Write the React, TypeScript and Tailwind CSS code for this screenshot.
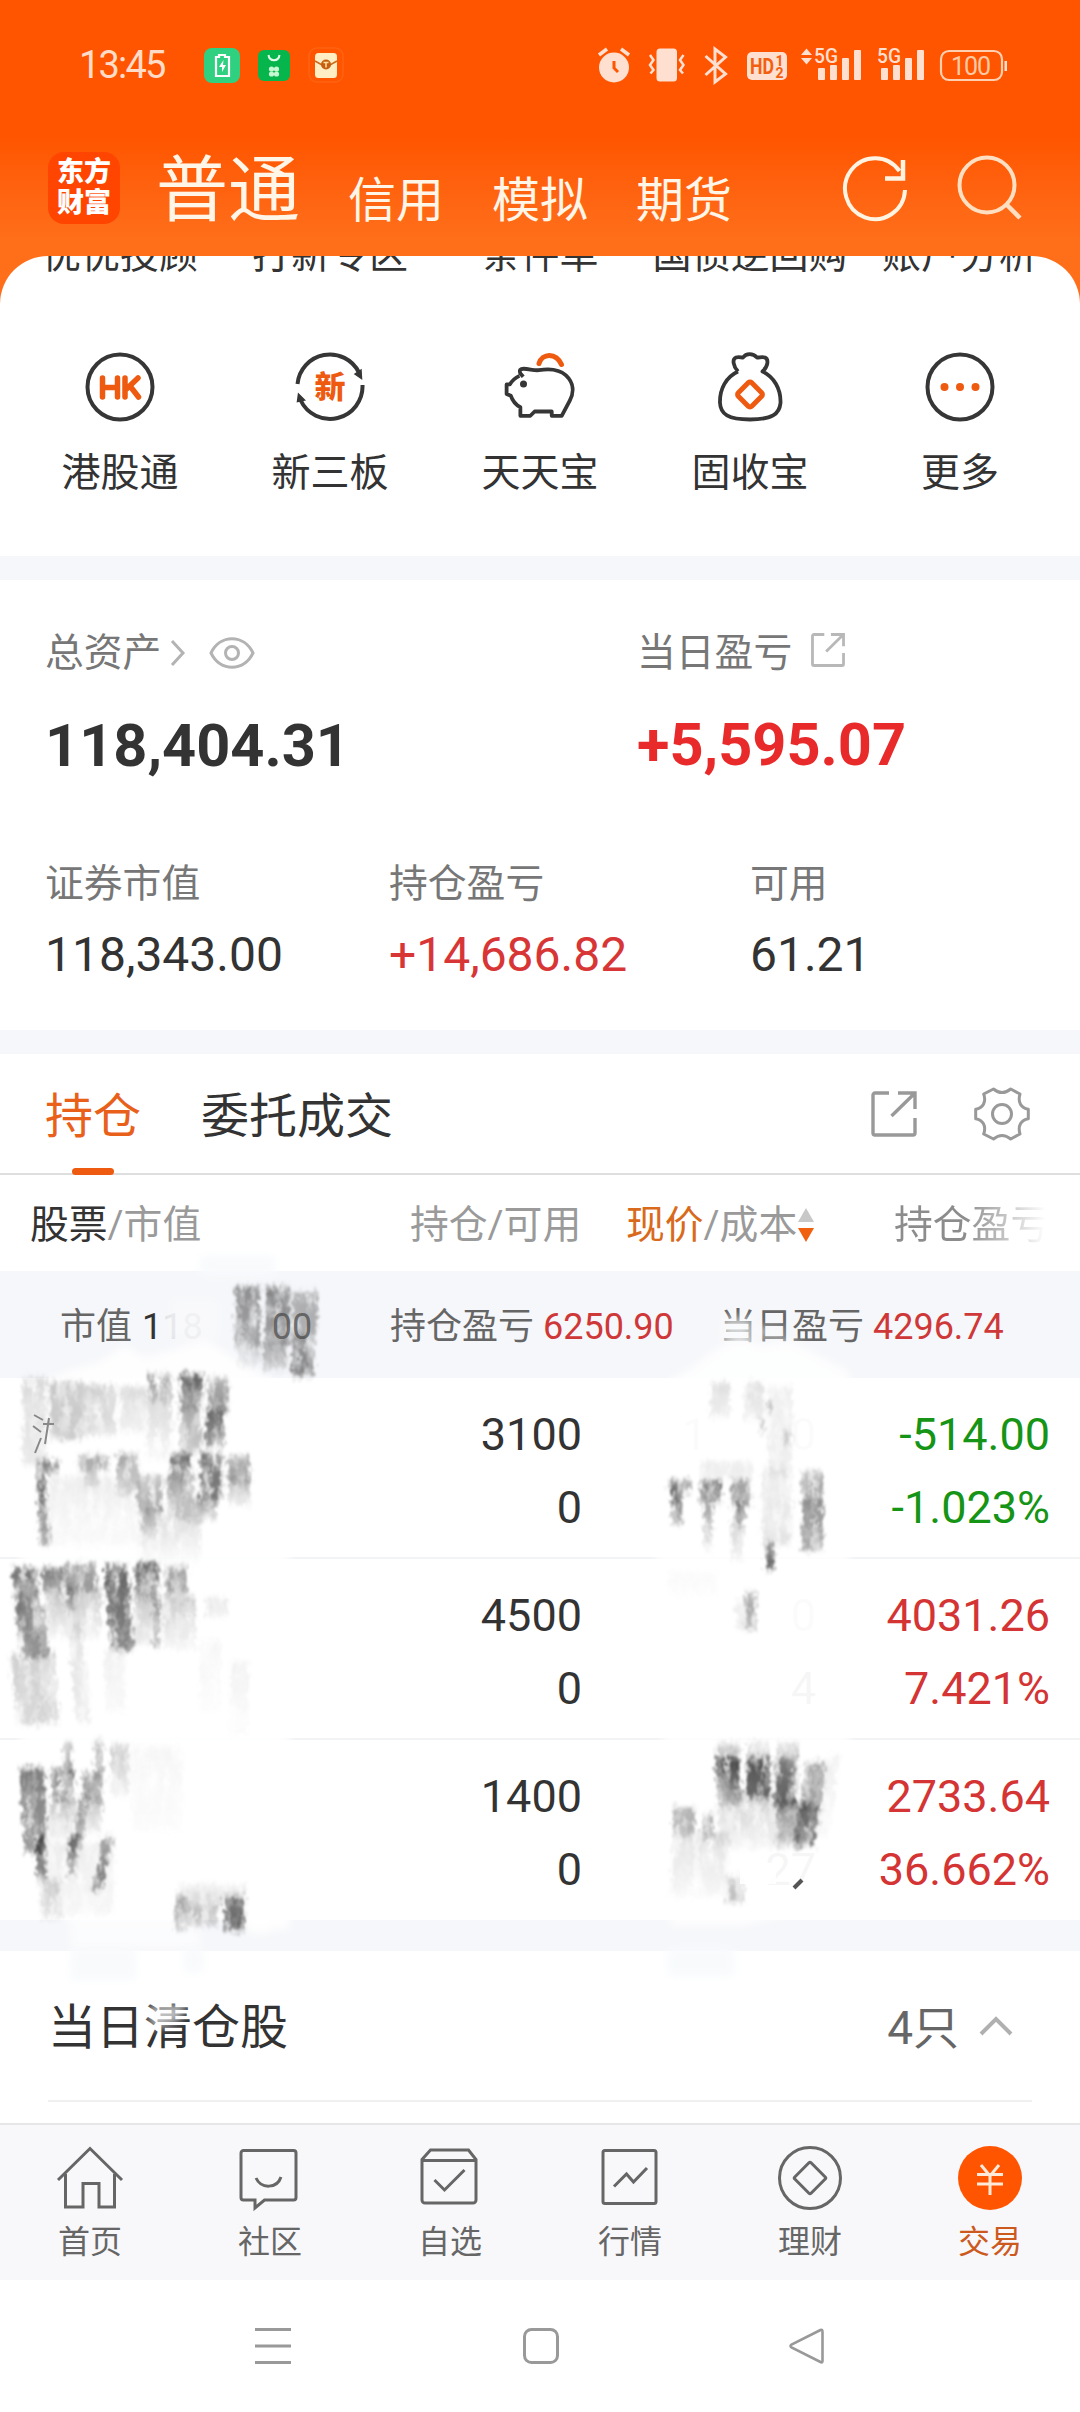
import type { ReactNode } from 'react';
import clsx from 'clsx';

const clippedLabels = ['优优投顾', '打新专区', '条件单', '国债逆回购', '账户分析'];

const HkIcon = () => (
  <svg width="72" height="72" viewBox="0 0 72 72" fill="none">
    <circle cx="36" cy="36" r="32.5" stroke="#363636" strokeWidth="4" />
    <path d="M18.5 27v19M33.500 27v19M18.500 36.500h15M41 27v19M54 27L42.500 38M46 35L54.500 46" stroke="#ee5a10" strokeWidth="5.500" strokeLinecap="round" strokeLinejoin="round" />
  </svg>
);

const NewBoardIcon = () => (
  <svg width="72" height="72" viewBox="0 0 72 72" fill="none">
    <path d="M3.500 33A32.500 32.500 0 0 1 65 21.500M68.500 34A32.500 32.500 0 0 1 6.500 49" stroke="#363636" strokeWidth="4" />
    <path d="M61 23l6-4 .5 8.500zM4.500 43l-1 7.500 7-1.500z" fill="#363636" stroke="#363636" strokeWidth="1.500" />
    <text x="36" y="46.500" textAnchor="middle" fontSize="31" fontWeight="900" fill="#ee5a10" fontFamily="Noto Sans CJK SC, sans-serif">新</text>
  </svg>
);

const PiggyIcon = () => (
  <svg width="72" height="72" viewBox="0 0 72 72" fill="none">
    <path
      d="M15.500 23.500L12.500 20c-1.500-4 0-5 3.500-5 6 0 10 2 16 1.500 12-2 22-.5 28.500 5.500 8.500 8 8.500 18 4 26.500L56 64.500H45.500V60h-18l-4.500 4.500H12.500V55.500C7 52.500 4 48 2.500 43.500L-2 41.500V31.500h3.500C3.500 28 6 25 11.500 22.500"
      transform="translate(4.500 3.500) scale(.95)"
      stroke="#363636"
      strokeWidth="4"
      strokeLinejoin="round"
    />
    <circle cx="19.500" cy="33" r="3.500" fill="#363636" />
    <path d="M35 12.500C38 2 52 1 57.500 13.500" stroke="#ee5a10" strokeWidth="5" strokeLinecap="round" />
  </svg>
);

const BagIcon = () => (
  <svg width="72" height="72" viewBox="0 0 72 72" fill="none">
    <path
      d="M24 20.500C19 15 18 8 22 6.500c3-1 5 0 7 0C32 2 39 2 43 6.500c3 0 5-1 8 0 4 2 3 9-2.500 14C60 26 67 38 66.500 52 65.500 63 58 68.500 36 68.500S6.500 63 6 52C5.500 38 12 26 24 20.500"
      stroke="#363636"
      strokeWidth="3.800"
      strokeLinejoin="round"
    />
    <rect x="26.500" y="34" width="19" height="19" rx="2.500" transform="rotate(45 36 43.500)" stroke="#ee5a10" strokeWidth="5" />
  </svg>
);

const MoreIcon = () => (
  <svg width="72" height="72" viewBox="0 0 72 72" fill="none">
    <circle cx="36" cy="36" r="32.500" stroke="#363636" strokeWidth="4" />
    <g fill="#ee5a10">
      <circle cx="20.500" cy="36" r="4" />
      <circle cx="36" cy="36" r="4" />
      <circle cx="51.500" cy="36" r="4" />
    </g>
  </svg>
);

const shortcuts = [
  { label: '港股通', icon: <HkIcon /> },
  { label: '新三板', icon: <NewBoardIcon /> },
  { label: '天天宝', icon: <PiggyIcon /> },
  { label: '固收宝', icon: <BagIcon /> },
  { label: '更多', icon: <MoreIcon /> },
];

const holdings = [
  { held: '3100', free: '0', price: ['1', '0'], cost: ['', ''], profit: '-514.00', rate: '-1.023%', up: false },
  { held: '4500', free: '0', price: ['', '0'], cost: ['', '4'], profit: '4031.26', rate: '7.421%', up: true },
  { held: '1400', free: '0', price: ['', ''], cost: ['', '27'], profit: '2733.64', rate: '36.662%', up: true },
];

const ShareIcon = ({ size, color, width }: { size: number; color: string; width: number }) => (
  <svg width={size} height={size} viewBox="0 0 46 46" fill="none" stroke={color} strokeWidth={width}>
    <path d="M18 2H4a2 2 0 0 0-2 2v38a2 2 0 0 0 2 2h38a2 2 0 0 0 2-2V27M27 2h17V18M43.500 2.500L20.500 25" />
  </svg>
);

const StatusBar = () => (
  <div className="flex h-[128px] items-center pt-[1px] pl-[79px]">
    <span className="w-[125px] text-[38px] leading-none tracking-[-1.8px] text-[#ffdcc8]">13:45</span>
    <svg width="140" height="40" viewBox="204 44 140 40" fill="none">
      <rect x="204" y="47" width="36" height="35" rx="8" fill="#2fd180" />
      <path d="M219 56v-2h6v2h4v19h-13V56z" stroke="#fff" strokeWidth="2.200" />
      <path d="M223.500 59l-4.500 7h3v5l4-7h-3z" fill="#fff" />
      <rect x="258" y="49" width="32" height="31" rx="6" fill="#06b64c" />
      <path d="M268.500 54c1 7 10 7 11 0" stroke="#e3ffe9" strokeWidth="2" />
      <g fill="#c8f7d3">
        <circle cx="271.500" cy="68" r="2.600" /><circle cx="276.500" cy="68" r="2.600" />
        <circle cx="271.500" cy="73" r="2.600" /><circle cx="276.500" cy="73" r="2.600" />
      </g>
      <rect x="309" y="47" width="34" height="34" rx="8" stroke="#ff6210" strokeWidth="1.500" />
      <rect x="315" y="52" width="22" height="25" rx="3.500" fill="#ffedc4" />
      <path d="M315 60l7 4h8l7-4" stroke="#c96a1a" strokeWidth="1.500" />
      <circle cx="326" cy="63.500" r="5" fill="#c55e12" />
      <path d="M323.500 61.500h5M326 61.500v5" stroke="#ffdf9e" strokeWidth="1.500" />
    </svg>
    <svg className="ml-[250px]" width="420" height="40" viewBox="594 44 420 40" fill="none">
      <g fill="#ffdfd0">
        <circle cx="614" cy="66.500" r="15" />
        <rect x="656.500" y="47.500" width="20.500" height="33" rx="3.500" />
        <rect x="747" y="51" width="40" height="28" rx="5" />
        <path d="M801 54l5.500-6.500L812 54zM801 57h11l-5.500 6.500z" />
        {[818, 881].map((x) => (
          <g key={x}>
            <rect x={x} y="67" width="7" height="12" rx="1" />
            <rect x={x + 12} y="64" width="7" height="15" rx="1" />
            <rect x={x + 24} y="57" width="7" height="22" rx="1" />
            <rect x={x + 36} y="49" width="7" height="30" rx="1" />
          </g>
        ))}
        <rect x="1004.500" y="60" width="2.500" height="10" />
      </g>
      <path d="M614 60v7l4 4" stroke="#ff5500" strokeWidth="3" />
      <path d="M599 54l8-6M621 48l8 6" stroke="#ffdfd0" strokeWidth="3.500" />
      <path d="M650 54l3.500 5-3.500 5 3.500 5-3 3.500M683.500 54l-3.500 5 3.500 5-3.500 5 3 3.500" stroke="#ffdfd0" strokeWidth="2.500" />
      <path d="M705.500 55l20 18-10.500 8V48l10.500 8-20 18" stroke="#ffdfd0" strokeWidth="3" />
      <g fontFamily="Roboto, sans-serif" fill="#f2600f">
        <text x="750" y="73" fontSize="22" fontWeight="700" textLength="24" lengthAdjust="spacingAndGlyphs">HD</text>
        <text x="775.500" y="65" fontSize="14" fontWeight="700">1</text>
        <text x="775.500" y="77" fontSize="14" fontWeight="700">2</text>
        <text x="814" y="62" fontSize="21" fontWeight="500" fill="#ffdfd0" textLength="24" lengthAdjust="spacingAndGlyphs">5G</text>
        <text x="877" y="62" fontSize="21" fontWeight="500" fill="#ffdfd0" textLength="24" lengthAdjust="spacingAndGlyphs">5G</text>
        <text x="951" y="73.500" fontSize="25" fill="#ffc9a4" textLength="40">100</text>
      </g>
      <rect x="941" y="50" width="61" height="29" rx="8" stroke="#ffcfb0" strokeWidth="2.200" />
    </svg>
  </div>
);

const Header = () => (
  <header className="h-[304px] bg-linear-to-b from-[#ff5500] from-45% to-[#ff6f1a] to-80% text-white">
    <StatusBar />
    <div className="flex h-[128px] pl-12">
      <div className="mt-6 flex size-[72px] flex-col items-center justify-center rounded-2xl bg-[#ff4500] text-[27px] leading-[31px] font-black">
        <span>东方</span>
        <span>财富</span>
      </div>
      <nav className="ml-9 flex h-[99px] items-end gap-12 text-[48px] leading-none text-[#fff6e8]">
        <span className="text-[72px] leading-none">普通</span>
        <span className="mb-[2px]">信用</span>
        <span className="mb-[2px]">模拟</span>
        <span className="mb-[2px]">期货</span>
      </nav>
      <svg className="mt-6 ml-[108px]" width="186" height="72" viewBox="840 152 186 72" fill="none">
        <path d="M905 190A30 30.500 0 1 1 899.500 171" stroke="#fff3e2" strokeWidth="4" />
        <path d="M903 160v18.500H885" stroke="#fff3e2" strokeWidth="4.500" />
        <circle cx="987" cy="185" r="27.500" stroke="#ffdfc2" strokeWidth="4" />
        <path d="M1006 204l14 14" stroke="#ffdfc2" strokeWidth="4.500" />
      </svg>
    </div>
  </header>
);

const Shortcuts = () => (
  <section className="relative -mt-12 h-[300px] overflow-hidden rounded-t-[48px] bg-white text-[39px] text-[#333]">
    <div className="-mt-[23px] flex justify-center leading-[44px]">
      {clippedLabels.map((label) => (
        <div key={label} className="flex w-[210px] justify-center whitespace-nowrap">{label}</div>
      ))}
    </div>
    <div className="mt-[74px] flex justify-center">
      {shortcuts.map((item) => (
        <div key={item.label} className="flex w-[210px] flex-col items-center">
          {item.icon}
          <span className="mt-[28px] leading-[44px]">{item.label}</span>
        </div>
      ))}
    </div>
  </section>
);

const Stat = ({ label, children }: { label: ReactNode; children: ReactNode }) => (
  <div>
    <div className="flex h-[44px] items-center text-[38.800px] leading-[44px] text-[#777]">{label}</div>
    {children}
  </div>
);

const Assets = () => (
  <section className="h-[450px] px-[45px] pt-[51px] text-[#333]">
    <div className="grid grid-cols-[592px_1fr]">
      <Stat
        label={
          <>
            总资产
            <svg className="ml-[5px]" width="100" height="36" viewBox="168 634 100 36" fill="none" stroke="#b3b3b3" strokeWidth="3">
              <path d="M174 640l11 12-11 12" />
              <path d="M213 652c9-19 33-19 42 0-9 19-33 19-42 0z" />
              <circle cx="234" cy="652" r="6.500" />
            </svg>
          </>
        }
      >
        <div className="mt-[39px] text-[59.500px] leading-[64px] font-bold">118,404.31</div>
      </Stat>
      <Stat label={<>当日盈亏<span className="mt-[-6px] ml-[19px]"><ShareIcon size={34} color="#b8b8b8" width={3.8} /></span></>}>
        <div className="mt-[38px] text-[59.500px] leading-[64px] font-bold text-[#e92a2a]">+5,595.07</div>
      </Stat>
    </div>
    <div className="mt-[84px] grid grid-cols-[344px_361px_1fr]">
      <Stat label="证券市值">
        <div className="mt-[23px] text-[48px] leading-[52px]">118,343.00</div>
      </Stat>
      <Stat label="持仓盈亏">
        <div className="mt-[23px] text-[48px] leading-[52px] text-[#d83636]">+14,686.82</div>
      </Stat>
      <Stat label="可用">
        <div className="mt-[23px] text-[48px] leading-[52px]">61.21</div>
      </Stat>
    </div>
  </section>
);

const Tabs = () => (
  <div className="flex h-[121px] items-start border-b-2 border-[#dedede] pr-[50px] pl-[45px] text-[48px]">
    <div className="flex h-[121px] flex-col items-center text-[#e8601a]">
      <span className="mt-[37px] leading-[52px]">持仓</span>
      <span className="mt-auto h-[7px] w-[42px] rounded-sm bg-[#ee5a10]" />
    </div>
    <span className="mt-[37px] ml-[60px] leading-[52px] text-[#333]">委托成交</span>
    <div className="mt-[32px] ml-auto flex items-center gap-[57px]">
      <ShareIcon size={46} color="#999" width={3.4} />
      <svg width="56" height="56" viewBox="0 0 56 56" fill="none" stroke="#999" strokeWidth="3">
        <path
          d="M9.700 8L19.500 3Q28 10 36.700 3L46 8C43.500 16 47 22 54.300 23.300V32.700C47 34 43.500 40 46 48L36.700 53Q28 46 19.500 53L9.700 48C12.500 40 9 34 1.700 32.700V23.300C9 22 12.500 16 9.700 8z"
          strokeLinejoin="round"
        />
        <circle cx="28" cy="28" r="9.500" />
      </svg>
    </div>
  </div>
);

const TableHead = () => (
  <div className="flex h-[96px] items-center pt-[3px] text-[38.800px] leading-[44px] whitespace-nowrap text-[#9a9a9a]">
    <div className="w-[410px] pl-[30px]"><span className="text-[#333]">股票</span>/市值</div>
    <div className="w-[216px]">持仓/可用</div>
    <div className="flex w-[268px] items-center">
      <span><span className="text-[#d96a1c]">现价</span>/成本</span>
      <svg width="18" height="36" viewBox="0 0 18 36">
        <path d="M9 1l8 14H1z" fill="#c8c8c8" />
        <path d="M1 21h16L9 35z" fill="#f0600f" />
      </svg>
    </div>
    <div className="bg-linear-to-r from-[#8c8c8c] from-45% to-white to-98% bg-clip-text text-transparent">持仓盈亏</div>
  </div>
);

const Summary = () => (
  <div className="flex h-[107px] items-center bg-[#f6f7fa] pt-1 text-[36px] leading-[44px] whitespace-nowrap text-[#666]">
    <div className="flex w-[390px] pl-[60px]">
      <span className="w-[82px]">市值</span>
      <span className="text-[#333]">1</span>
      <span className="text-[#e2e3e6]">1</span>
      <span className="text-[#eaebee]">8</span>
      <span className="ml-[69px] text-[#777]">00</span>
    </div>
    <div className="w-[330px]">持仓盈亏 <span className="text-[#cf3838]">6250.90</span></div>
    <div>当日盈亏 <span className="text-[#cf3838]">4296.74</span></div>
  </div>
);

const Ghost = ({ chars, className }: { chars: string[]; className: string }) => (
  <span className={clsx('flex h-[73px] justify-between pl-[100px]', className)}>
    <span>{chars[0]}</span>
    <span>{chars[1]}</span>
  </span>
);

const Holdings = () => (
  <div>
    {holdings.map((row, i) => (
      <div
        key={row.held}
        className={clsx('grid grid-cols-[582px_234px_234px] text-right text-[45px] leading-[73px] text-[#333]', i < 2 ? 'h-[181px] border-b-2 border-[#f2f3f5]' : 'h-[180px]')}
      >
        <div className="pt-[20px]">
          <div>{row.held}</div>
          <div>{row.free}</div>
        </div>
        <div className="pt-[20px]">
          <Ghost chars={row.price} className="text-[#ececec]" />
          <Ghost chars={row.cost} className="text-[#d2d2d2]" />
        </div>
        <div className={clsx('pt-[20px]', row.up ? 'text-[#d43434]' : 'text-[#169416]')}>
          <div>{row.profit}</div>
          <div>{row.rate}</div>
        </div>
      </div>
    ))}
  </div>
);

// x, y, width, height, opacity at top, opacity at bottom, sideways drift
type Stroke = [number, number, number, number, number, number, number?];

const strokes: Stroke[] = [
  [235, 1287, 25, 58, 0.6, 0.5], [238, 1343, 22, 24, 0.3, 0.05],
  [265, 1287, 25, 58, 0.65, 0.55], [263, 1343, 24, 28, 0.5, 0.2],
  [293, 1291, 24, 46, 0.4, 0.45], [292, 1335, 22, 41, 0.5, 0.75],
  [22, 1377, 24, 88, 0.2, 0.12], [50, 1382, 32, 58, 0.3, 0.3], [82, 1385, 34, 50, 0.25, 0.18],
  [120, 1387, 26, 45, 0.2, 0.08], [149, 1375, 22, 26, 0.8, 0.3], [147, 1398, 25, 62, 0.2, 0.05],
  [180, 1374, 22, 32, 0.95, 0.5], [180, 1404, 22, 48, 0.5, 0.3], [208, 1378, 20, 36, 0.4, 0.7], [206, 1412, 18, 36, 0.8, 0.6],
  [36, 1461, 22, 12, 0.8, 0.5], [36, 1470, 9, 76, 0.9, 0.5, 5],
  [78, 1456, 30, 14, 0.5, 0.4], [85, 1468, 12, 20, 0.3, 0.1], [117, 1454, 22, 42, 0.5, 0.15],
  [138, 1476, 24, 36, 0.3, 0.5], [142, 1508, 18, 30, 0.4, 0.05],
  [171, 1453, 20, 25, 0.9, 0.5], [168, 1475, 26, 44, 0.5, 0.3],
  [200, 1453, 22, 48, 0.7, 0.8], [195, 1500, 22, 20, 0.5, 0.2],
  [228, 1456, 22, 26, 0.4, 0.6], [228, 1480, 22, 25, 0.4, 0.1],
  [50, 1476, 90, 70, 0.1, 0.03], [140, 1515, 60, 50, 0.2, 0],
  [12, 1568, 24, 40, 0.75, 0.7, 4], [16, 1606, 28, 52, 0.7, 0.6, 5],
  [43, 1568, 20, 22, 0.75, 0.5], [64, 1564, 32, 26, 0.5, 0.6], [66, 1588, 8, 24, 0.7, 0.4], [45, 1588, 56, 50, 0.35, 0.05],
  [104, 1566, 23, 84, 0.85, 0.7, 7], [135, 1563, 24, 36, 0.85, 0.5], [134, 1594, 22, 50, 0.3, 0.1], [154, 1596, 6, 52, 0.55, 0.3],
  [165, 1567, 22, 26, 0.45, 0.6], [163, 1595, 32, 54, 0.3, 0.05], [206, 1598, 22, 18, 0.15, 0.08],
  [10, 1654, 26, 70, 0.25, 0.22, 8], [36, 1652, 18, 72, 0.2, 0.22, 5],
  [68, 1622, 14, 100, 0.15, 0.12, 8], [105, 1650, 20, 60, 0.08, 0.04], [200, 1640, 20, 70, 0.05, 0.02], [230, 1662, 18, 72, 0.07, 0.03],
  [64, 1743, 8, 30, 0.3, 0.5], [95, 1740, 8, 40, 0.3, 0.4], [111, 1745, 18, 50, 0.3, 0.1], [132, 1746, 50, 84, 0.05, 0.02],
  [20, 1768, 24, 84, 0.7, 0.6, 4], [36, 1836, 9, 44, 1, 0.8, 1],
  [52, 1768, 22, 34, 0.65, 0.6], [50, 1802, 26, 35, 0.3, 0.1], [82, 1772, 20, 30, 0.4, 0.6],
  [80, 1798, 10, 48, 0.7, 0.4, -8], [88, 1802, 14, 30, 0.3, 0.1], [71, 1834, 7, 42, 1, 0.4, -4],
  [104, 1836, 9, 54, 0.4, 0.8, -12], [38, 1880, 20, 40, 0.25, 0.1, 4], [44, 1842, 70, 72, 0.1, 0.05],
  [175, 1896, 12, 34, 0.5, 0.4], [186, 1904, 32, 22, 0.4, 0.3], [224, 1896, 21, 34, 0.7, 0.9], [178, 1884, 68, 18, 0.05, 0.25],
  [710, 1383, 20, 34, 0.18, 0.1], [744, 1383, 20, 36, 0.18, 0.1], [768, 1387, 24, 90, 0.08, 0.1],
  [766, 1402, 5, 12, 0.6, 0.2], [760, 1420, 4, 14, 0.5, 0.2], [785, 1430, 3, 14, 0.4, 0.2],
  [669, 1481, 22, 10, 0.8, 0.5], [672, 1488, 10, 36, 0.9, 0.5], [700, 1480, 21, 22, 0.9, 0.6], [704, 1500, 8, 50, 0.6, 0.1],
  [731, 1480, 20, 26, 0.5, 0.5], [736, 1502, 8, 24, 0.9, 0.5], [731, 1520, 12, 40, 0.3, 0.05], [700, 1462, 52, 16, 0.12, 0.08],
  [762, 1467, 30, 78, 0.08, 0.16], [766, 1543, 8, 26, 0.5, 1], [802, 1472, 21, 30, 0.45, 0.55], [802, 1500, 21, 50, 0.55, 0.5],
  [746, 1592, 10, 38, 0.5, 0.4], [736, 1600, 9, 28, 0.1, 0.2], [668, 1572, 50, 24, 0.03, 0.01],
  [718, 1743, 22, 17, 0.2, 0.4], [716, 1758, 24, 30, 1, 0.8], [720, 1788, 22, 15, 0.5, 0.3],
  [748, 1741, 20, 17, 0.2, 0.4], [747, 1756, 23, 42, 0.95, 0.85], [778, 1743, 20, 15, 0.15, 0.3], [776, 1757, 22, 50, 0.7, 0.95, -2],
  [776, 1802, 24, 44, 0.6, 0.4], [806, 1763, 20, 50, 0.5, 0.6, -6], [800, 1804, 20, 42, 0.8, 0.8, -6], [826, 1755, 14, 80, 0.08, 0.05, -12],
  [718, 1792, 58, 56, 0.3, 0.05], [673, 1808, 22, 26, 0.4, 0.45], [703, 1815, 10, 24, 0.5, 0.4], [674, 1832, 56, 64, 0.16, 0.05, -6],
  [726, 1876, 18, 26, 0.25, 0.4],
];

const Scribbles = () => (
  <svg className="pointer-events-none absolute inset-x-0 top-[1240px]" width="1080" height="800" viewBox="0 1240 1080 800">
    <defs>
      <filter id="brush" x="0" y="1240" width="1080" height="800" filterUnits="userSpaceOnUse" colorInterpolationFilters="sRGB">
        <feTurbulence type="fractalNoise" baseFrequency="0.16 0.03" numOctaves="3" seed="7" result="grain" />
        <feColorMatrix in="grain" type="matrix" values="0 0 0 0 0  0 0 0 0 0  0 0 0 0 0  2.2 0 0 0 -0.3" result="mask" />
        <feGaussianBlur in="SourceGraphic" stdDeviation="1 2.500" result="smooth" />
        <feComposite in="smooth" in2="mask" operator="in" result="streaks" />
        <feTurbulence type="fractalNoise" baseFrequency="0.3 0.15" numOctaves="2" seed="3" result="rough" />
        <feDisplacementMap in="streaks" in2="rough" scale="12" xChannelSelector="R" yChannelSelector="G" />
        <feGaussianBlur stdDeviation="0.8 1.200" />
      </filter>
      <filter id="soft" x="-10%" y="-20%" width="120%" height="140%">
        <feGaussianBlur stdDeviation="5" />
      </filter>
      {strokes.map((s, i) => (
        <linearGradient key={i} id={`s${i}`} x1="0" y1="0" x2="0" y2="1">
          <stop offset="0" stopColor="#444" stopOpacity={s[4]} />
          <stop offset="1" stopColor="#555" stopOpacity={s[5]} />
        </linearGradient>
      ))}
    </defs>
    <g fill="#fff" filter="url(#soft)">
      <path d="M20 1392L70 1370 100 1362 125 1345 145 1358 205 1340 225 1352 290 1392V1930H250L230 1918H60L20 1900z" opacity=".85" />
      <path d="M650 1392L690 1368 722 1345 740 1335 760 1345 790 1340 850 1372V1900L740 1926H670z" opacity=".8" />
      <path d="M170 1298h50v40h-50z" opacity=".3" />
      <path d="M70 1915h130v34H70zM248 1915h22v20h-22z" opacity=".6" />
    </g>
    <g fill="#f8fafc" filter="url(#soft)">
      <path d="M200 1256h75v20h-75zM70 1948h66v32H70zM184 1948h20v25h-20zM668 1948h66v28h-66z" />
    </g>
    <g filter="url(#brush)">
      {strokes.map(([x, y, w, h, , , drift = 0], i) => (
        <path key={i} d={`M${x} ${y}h${w}l${drift} ${h}h${-w}z`} fill={`url(#s${i})`} />
      ))}
    </g>
    <path d="M34 1415l9 5M33 1426l8 6M41 1438l-6 15M49 1418l-4 26M43 1424h11" stroke="#888" strokeWidth="2" fill="none" />
    <path d="M722 1318h30v24h-30zM755 1328h28v8h-28zM148 2006l40-2-10 18-26 8z" fill="#fbfcfd" opacity=".7" filter="url(#soft)" />
    <path d="M740 1868h36v16h-36z" fill="#fff" opacity=".9" />
    <path d="M802 1880l-8 8" stroke="#555" strokeWidth="4" />
  </svg>
);

const ClearedToday = () => (
  <section className="flex h-[172px] flex-col px-12">
    <div className="flex h-[151px] items-center border-b-2 border-[#f0f0f0] pt-[5px] text-[48px] text-[#333]">
      <span>当日清仓股</span>
      <span className="ml-auto text-[46px] text-[#666]">4只</span>
      <svg className="mt-[-4px] mr-[19px] ml-5" width="34" height="20" viewBox="0 0 34 20" fill="none">
        <path d="M2 18L17 3l15 15" stroke="#b0b0b0" strokeWidth="4" />
      </svg>
    </div>
  </section>
);

const navItems: { label: string; icon: ReactNode; active?: boolean }[] = [
  { label: '首页', icon: <path d="M2 34L34 2.500 66 34M9.500 28V61H27V37.500H43V61H58.500V28" /> },
  { label: '社区', icon: <path d="M7.500 4.500h50a2.500 2.500 0 0 1 2.500 2.500v44.500a2.500 2.500 0 0 1-2.500 2.500H28.500L19 62V54H7.500A2.500 2.500 0 0 1 5 51.500V7a2.500 2.500 0 0 1 2.500-2.500zM20 32c5 11 21 11 25-1" /> },
  { label: '自选', icon: <path d="M6 13.500L14.500 4h38L60 13.500v40.500a3 3 0 0 1-3 3H9a3 3 0 0 1-3-3zM6 14.500h54M18.500 34l10 10 20-20" /> },
  { label: '行情', icon: <path d="M9 4.500h49a2 2 0 0 1 2 2v49a2 2 0 0 1-2 2H9a2 2 0 0 1-2-2v-49a2 2 0 0 1 2-2zM18 40.500L30.500 28l7 8L51 22" /> },
  { label: '理财', icon: <><circle cx="34" cy="32" r="30.500" /><rect x="22.500" y="20.500" width="23" height="23" rx="1.500" transform="rotate(45 34 32)" /></> },
  { label: '交易', icon: <><circle cx="34" cy="32" r="32" fill="#ff5500" stroke="none" /><path d="M25 19l9 11 9-11M34 29v20M21 28.500h26M21 38h26" stroke="#ffe9d8" /></>, active: true },
];

const BottomNav = () => (
  <nav className="flex h-[157px] border-t-2 border-[#e6e6e6] bg-[#f8f8fa]">
    {navItems.map((item) => (
      <div key={item.label} className="flex flex-1 flex-col items-center pt-[21px]">
        <svg width="68" height="64" viewBox="0 0 68 64" fill="none" stroke="#666" strokeWidth="3" className="overflow-visible">
          {item.icon}
        </svg>
        <span className={clsx('mt-[12px] text-[32px] leading-[40px]', item.active ? 'text-[#cc5a1e]' : 'text-[#666]')}>{item.label}</span>
      </div>
    ))}
  </nav>
);

const SystemNav = () => (
  <div className="flex h-[132px] items-center justify-center">
    <svg width="600" height="44" viewBox="240 2324 600 44" fill="none" stroke="#999" strokeWidth="3">
      <path d="M255 2329.500h36M255 2346h36M255 2362.500h36" />
      <rect x="524.500" y="2329.500" width="33" height="33" rx="7" />
      <path d="M822.500 2332v29q0 2-2 1l-29-14.500q-2-1.500 0-3l29-14.500q2-1 2 2z" strokeWidth="2.600" />
    </svg>
  </div>
);

export default function App() {
  return (
    <div className="relative h-[2412px] w-[1080px] overflow-hidden bg-white font-[Roboto,'Noto_Sans_CJK_SC',sans-serif]">
      <Header />
      <Shortcuts />
      <div className="h-6 bg-[#f6f7fa]" />
      <Assets />
      <div className="h-6 bg-[#f6f7fa]" />
      <Tabs />
      <TableHead />
      <Summary />
      <Holdings />
      <div className="h-[31px] bg-[#f6f7fa]" />
      <ClearedToday />
      <BottomNav />
      <SystemNav />
      <Scribbles />
    </div>
  );
}
